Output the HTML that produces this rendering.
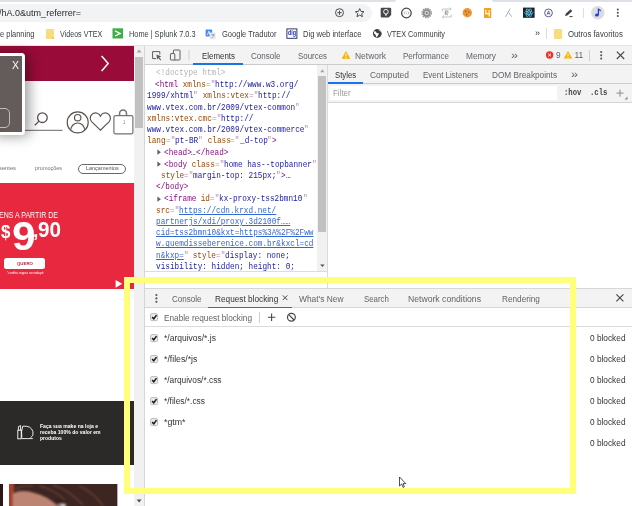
<!DOCTYPE html>
<html lang="pt-BR"><head><meta charset="utf-8"><title>DevTools - Request blocking</title>
<style>
html,body{margin:0;padding:0;}
body{width:632px;height:506px;overflow:hidden;position:relative;background:#fff;font-family:"Liberation Sans",sans-serif;}
#root{position:absolute;left:0;top:0;width:632px;height:506px;overflow:hidden;}
#root>div,#root>svg{position:absolute;box-sizing:border-box;}
.t{position:absolute;white-space:pre;transform-origin:0 50%;}
.t u{text-decoration:underline;}
</style></head><body><div id="root">
<div style="left:0px;top:0px;width:632px;height:46px;background:#fff;"></div>
<div style="left:0px;top:0px;width:396px;height:2px;background:#dfe1e8;border-bottom-right-radius:3px;"></div>
<div style="left:492px;top:0px;width:140px;height:2px;background:#dfe1e8;border-bottom-left-radius:3px;"></div>
<div style="left:-12px;top:4px;width:384px;height:18px;background:#f1f3f4;border-radius:9px;"></div>
<div style="left:0px;top:45px;width:632px;height:1px;background:#e3e3e3;"></div>
<svg style="left:334px;top:7px" width="32" height="12" viewBox="0 0 32 12"><g fill="none" stroke="#4a4d51" stroke-width="1"><circle cx="5.5" cy="5.7" r="4"/><path d="M5.5 3.5v4.4M3.3 5.7h4.4"/><path d="M25.7 1.6l1.3 2.8 3 .3-2.3 2 .7 3-2.7-1.6-2.7 1.6.7-3-2.3-2 3-.3z" stroke-linejoin="round"/></g></svg>
<svg style="left:378px;top:5px" width="250" height="16" viewBox="0 0 250 16"><path d="M3.700 2.700h8.500q1 0 1 1v6.300l-2.600 2.600h-6.900q-1 0-1-1v-7.900q0-1 1-1z" fill="#47484b"/><circle cx="7.900" cy="6.700" r="2.300" fill="none" stroke="#fff" stroke-width=".9"/><path d="M7 9.300h1.800v1.300h-1.800z" fill="#fff"/><circle cx="28.400" cy="8" r="4.800" fill="#fff" stroke="#46494d" stroke-width="1.250"/><path d="M27 6.600l-1.200 1.400 1.200 1.400M29.800 6.600l1.200 1.400-1.200 1.400" fill="none" stroke="#8a8d91" stroke-width=".7"/><circle cx="28.400" cy="8" r=".6" fill="#8a8d91"/><circle cx="48.700" cy="8" r="4.600" fill="none" stroke="#979797" stroke-width="1.400" stroke-dasharray="1.600 .8"/><circle cx="48.700" cy="8" r="3.900" fill="#8e8e8e"/><circle cx="48.700" cy="8" r="2.300" fill="#cfcfcf"/><circle cx="48.700" cy="8" r="1" fill="#7a7a7a"/><path d="M64.400 6.400v-2.400h8.600M71.600 2.600l1.600 1.400-1.600 1.400M73.200 9.600v2.400h-8.600M66 10.600l-1.600 1.400 1.600 1.400" fill="none" stroke="#b4b6b9" stroke-width=".8"/><path d="M67.300 10.200V5.900h1.700q1.200 0 1.200 1.100t-1.200 1.100h-1.500l2.500 2.100" fill="none" stroke="#8d8f92" stroke-width=".9"/><circle cx="89.3" cy="7.8" r="4.7" fill="#e99a3b"/><circle cx="87.6" cy="6.4" r=".8" fill="#a4561b"/><circle cx="90.8" cy="7.2" r=".8" fill="#a4561b"/><circle cx="88.6" cy="9.6" r=".8" fill="#a4561b"/><rect x="106" y="3" width="7.2" height="10" rx=".6" fill="#f5a21b"/><path d="M107.8 5v3.6h3.6M111.2 5v6.6" fill="none" stroke="#fff" stroke-width="1.1"/><path d="M132.2 3.6l-4.6 8.2M130.6 7.4l3.2 4.4" fill="none" stroke="#9fb0bf" stroke-width="1"/><rect x="145" y="2.6" width="11.6" height="10.2" fill="#1d2027"/><g fill="none" stroke="#5ad2f4" stroke-width=".7"><ellipse cx="150.8" cy="7.7" rx="4.3" ry="1.7"/><ellipse cx="150.8" cy="7.7" rx="4.3" ry="1.7" transform="rotate(60 150.8 7.7)"/><ellipse cx="150.8" cy="7.7" rx="4.3" ry="1.7" transform="rotate(120 150.8 7.7)"/></g><circle cx="150.8" cy="7.7" r=".8" fill="#5ad2f4"/><circle cx="170.500" cy="7.900" r="3.900" fill="#fff" stroke="#46537d" stroke-width=".9"/><path d="M169 9.700l1.500-3.800 1.500 3.800M169.500 8.600h2" fill="none" stroke="#46537d" stroke-width=".8"/><path d="M187 11.2l1-2.6 4.6-4.4 1.7 1.7-4.6 4.4z" fill="#3c3f43"/><path d="M191.5 11.6h3" stroke="#3c3f43" stroke-width="1"/><path d="M205.4 3v10" stroke="#dadce0" stroke-width="1"/><circle cx="219.8" cy="7.7" r="6.8" fill="#dcdde0"/><path d="M220.4 3.6v6.2" stroke="#1f3fd6" stroke-width="1.3" fill="none"/><ellipse cx="218.9" cy="10" rx="1.9" ry="1.5" fill="#1f3fd6"/><path d="M220.4 3.4q2.8 .6 3 3.4q-1.2-1.4-3-1.5z" fill="#1f3fd6"/><circle cx="239.8" cy="4.4" r="1" fill="#4a4d51"/><circle cx="239.8" cy="7.7" r="1" fill="#4a4d51"/><circle cx="239.8" cy="11" r="1" fill="#4a4d51"/></svg>
<div style="left:46px;top:29px;width:7.5px;height:9.5px;background:#f9dc7e;border-radius:1px;"></div>
<div style="left:51.5px;top:36.5px;width:2px;height:2px;background:#f3c846;"></div>
<svg style="left:112px;top:28px" width="12" height="11" viewBox="0 0 12 11"><rect x=".5" y=".3" width="10.6" height="10.2" fill="#3fae49"/><path d="M3 2.8l5.2 2.6L3 8" fill="none" stroke="#fff" stroke-width="1.3"/></svg>
<svg style="left:205.300px;top:28.800px" width="12" height="11" viewBox="0 0 12 11"><rect x=".6" y=".6" width="6.6" height="7" rx=".8" fill="#4a8af4"/><rect x="4.6" y="3.6" width="6" height="6.6" rx=".8" fill="#e4e6ea"/><path d="M2.4 6l1.5-3.8L5.4 6" stroke="#fff" stroke-width=".8" fill="none"/><path d="M6 5.8h3.6M7.8 5v1M6.6 8.8q2-1 2.4-3" stroke="#7b8087" stroke-width=".6" fill="none"/></svg>
<svg style="left:286px;top:28px" width="12" height="11" viewBox="0 0 12 11"><rect x=".9" y=".9" width="10" height="9.4" fill="#fff" stroke="#1b2455" stroke-width=".9"/></svg>
<svg style="left:372px;top:28px" width="11" height="11" viewBox="0 0 11 11"><circle cx="5.3" cy="5.5" r="4.4" fill="#3c4043"/><path d="M2.2 3.4q1.6-.4 2.2 1t2 .6q1 .8-.2 2t-1 2.4q-1.2-.2-1.4-1.8t-1.8-1.8z" fill="#fff"/><path d="M6.6 1.6q.4 1 1.6 1.2t1 1.4" stroke="#fff" stroke-width=".7" fill="none"/></svg>
<div style="left:546px;top:28px;width:1px;height:11px;background:#dadce0;"></div>
<div style="left:554.3px;top:29px;width:7.5px;height:9.5px;background:#f9dc7e;border-radius:1px;"></div>
<div style="left:0px;top:46px;width:134px;height:460px;background:#fff;"></div>
<div style="left:0px;top:46px;width:134px;height:35px;background:#990c3a;"></div>
<svg style="left:99px;top:54px" width="13" height="19" viewBox="0 0 13 19"><path d="M2.6 2l6.6 7.4L2.6 17" fill="none" stroke="#fff" stroke-width="1.5"/></svg>
<svg style="left:24px;top:108px" width="112" height="30" viewBox="0 0 112 30"><g fill="none" stroke="#5a5351" stroke-width="1.150"><circle cx="18.400" cy="9.700" r="4.800" stroke-width="1.300"/><path d="M15 13.100l-4.200 4.200" stroke-width="1.300"/><path d="M0 22.3h38.5" stroke="#8a8583"/><circle cx="53.700" cy="14.400" r="10.500"/><circle cx="53.700" cy="9.700" r="3.200"/><path d="M46.900 21.800A6.800 6.800 0 0 1 60.500 21.800"/><path d="M76.400 22.200l-8.600-8.400q-2.800-3.400-.6-6.600 2.400-3.400 6.200-2 2 .8 3 3 1-2.200 3-3 3.600-1.400 6 2 2.200 3.200-.4 6.600z"/><rect x="89.900" y="7.600" width="19" height="18.300" rx="1.600" stroke="#77716f" stroke-width="1.200"/><path d="M95.600 7.600V5.450A3.450 3.450 0 0 1 102.500 5.450V7.600" stroke="#77716f" stroke-width="1.500"/></g></svg>
<div style="left:77.6px;top:163.6px;width:48.6px;height:10.4px;background:#fff;border:1px solid #6b6563;border-radius:6px;"></div>
<div style="left:0px;top:183.2px;width:134px;height:105.5px;background:#e8283e;"></div>
<div style="left:4.2px;top:257.8px;width:40.4px;height:11.2px;background:#fff;border-radius:2.5px;"></div>
<svg style="left:115px;top:279px" width="9" height="10" viewBox="0 0 9 10"><path d="M.6 1l6.600 3.800L.6 8.800z" fill="#fff"/></svg>
<div style="left:0px;top:401px;width:134px;height:63.6px;background:#2c2a29;"></div>
<svg style="left:16px;top:423px" width="20" height="18" viewBox="0 0 20 18"><g fill="none" stroke="#fff" stroke-width=".9"><path d="M5.800 14.800q-1-6.800 1-11.600 8.400-.8 10.200 5.600.8 4-2.400 6"/><rect x="1.800" y="7.200" width="3.400" height="8.600"/><path d="M2.400 7.200v-3.600l2.200-1v4.600"/><path d="M5.800 15.600h11"/></g></svg>
<div style="left:0px;top:483.6px;width:2.8px;height:22.4px;background:#2e1518;"></div>
<svg style="left:9.300px;top:483.600px" width="108.400" height="22.400" viewBox="0 0 108.400 22.400"><defs><filter id="bl" x="-5%" y="-20%" width="110%" height="140%"><feGaussianBlur stdDeviation="0.9"/></filter><clipPath id="pc"><rect width="108.400" height="22.400"/></clipPath></defs><rect width="108.400" height="22.400" fill="#3d2521"/><g clip-path="url(#pc)"><g filter="url(#bl)"><rect x="-2" y="-2" width="7" height="26" fill="#a8432f"/><path d="M4 24V9.500q6-3.500 16-2 14 3 22 9 5 3.500 9 7.500z" fill="#bd8473"/><path d="M6 5q8-4 18-3M30 2q14 3 26 14M44 1q16 5 30 20M70 2q14 6 24 20" stroke="#6d463b" stroke-width="1.600" fill="none" opacity=".8"/><path d="M45 19q5-3.500 13-1.500" stroke="#2a1815" stroke-width="1.500" fill="none"/><ellipse cx="53" cy="21.400" rx="4.200" ry="1.700" fill="#e4dcd8"/><circle cx="51" cy="22" r="1.300" fill="#5b4a44"/></g></g></svg>
<div style="left:-10px;top:53.4px;width:35px;height:81.3px;background:#645c5b;border:3.100px solid #fff;border-radius:3.500px;box-shadow:4px 1px 13px rgba(0,0,0,.4);"></div>
<div style="left:-6px;top:107.6px;width:16.4px;height:20.4px;background:transparent;border:1.200px solid #c2bab8;border-radius:5px;"></div>
<div style="left:133.5px;top:46px;width:11px;height:460px;background:#f1f1f1;"></div>
<div style="left:135.4px;top:57px;width:7.4px;height:71px;background:#c1c1c1;"></div>
<svg style="left:134px;top:46px" width="10" height="10" viewBox="0 0 10 10"><path d="M2.600 6.400l2.500-2.800 2.500 2.800z" fill="#a3a3a3"/></svg>
<svg style="left:134.200px;top:496.200px" width="10" height="10" viewBox="0 0 10 10"><path d="M2.600 3.600l2.500 2.800 2.500-2.800z" fill="#505050"/></svg>
<div style="left:144.4px;top:46px;width:1px;height:460px;background:#d6d6d6;"></div>
<div style="left:145.4px;top:46px;width:486.6px;height:460px;background:#fff;"></div>
<div style="left:145.4px;top:46px;width:486.6px;height:18.6px;background:#f3f3f3;border-bottom:1px solid #cbcbcb;"></div>
<svg style="left:150px;top:48px" width="44" height="14" viewBox="0 0 44 14"><g fill="none" stroke="#5a5d61" stroke-width="1"><path d="M9.800 6.600V3.600H2.600v7h3.600"/><path d="M6.400 6.600l5 1.900-2.100.8 1.900 2.400-.9.700-1.900-2.500-1.200 1.600z" fill="#5a5d61" stroke="none"/><rect x="23.400" y="2" width="6.600" height="10" rx=".8"/><rect x="20.400" y="5.600" width="4.400" height="6.400" rx=".6" fill="#f3f3f3"/><path d="M39 2v10" stroke="#cfcfcf"/></g></svg>
<div style="left:193px;top:63.2px;width:50.4px;height:1.6px;background:#1a73e8;"></div>
<svg style="left:341px;top:50px" width="10" height="10" viewBox="0 0 10 10"><path d="M5 .9l4.400 7.900H.6z" fill="#f4b400"/><path d="M5 3.600v2.800" stroke="#fff" stroke-width="1"/><circle cx="5" cy="7.500" r=".55" fill="#fff"/></svg>
<svg style="left:545px;top:50px" width="30" height="10" viewBox="0 0 30 10"><circle cx="4.600" cy="5" r="3.700" fill="#e8352b"/><path d="M3.200 3.600l2.800 2.800M6 3.600l-2.800 2.800" stroke="#fff" stroke-width=".9"/><path d="M23 1l4.200 7.600h-8.400z" fill="#f4b400"/><path d="M23 3.600v2.600" stroke="#fff" stroke-width=".9"/><circle cx="23" cy="7.300" r=".5" fill="#fff"/></svg>
<div style="left:589px;top:50px;width:1px;height:11px;background:#cfcfcf;"></div>
<svg style="left:597px;top:49px" width="30" height="13" viewBox="0 0 30 13"><circle cx="4.200" cy="3" r="1.080" fill="#55585c"/><circle cx="4.200" cy="6.300" r="1.080" fill="#55585c"/><circle cx="4.200" cy="9.600" r="1.080" fill="#55585c"/><path d="M19.800 2.600l7.400 7.400M27.200 2.600l-7.400 7.400" stroke="#45484c" stroke-width="1.200"/></svg>
<div style="left:317.3px;top:65px;width:9.9px;height:207px;background:#f1f1f1;"></div>
<div style="left:318.2px;top:76px;width:7.8px;height:156px;background:#c1c1c1;"></div>
<svg style="left:317.600px;top:67.200px" width="9" height="8" viewBox="0 0 9 8"><path d="M2.200 5.200l2.200-2.600 2.200 2.600z" fill="#a3a3a3"/></svg>
<svg style="left:317.800px;top:261.500px" width="9" height="8" viewBox="0 0 9 8"><path d="M2.200 2.400l2.200 2.600 2.200-2.600z" fill="#505050"/></svg>
<div style="left:327.2px;top:65px;width:1px;height:223px;background:#dadada;"></div>
<div style="left:145.4px;top:271.4px;width:182px;height:1px;background:#dcdcdc;"></div>
<svg style="left:157px;top:148.80px" width="5" height="7" viewBox="0 0 5 7"><path d="M.4 .6l3.500 2.600L.4 5.800z" fill="#5f5f5f"/></svg>
<svg style="left:157px;top:160.80px" width="5" height="7" viewBox="0 0 5 7"><path d="M.4 .6l3.500 2.600L.4 5.800z" fill="#5f5f5f"/></svg>
<svg style="left:157px;top:195.50px" width="5" height="7" viewBox="0 0 5 7"><path d="M.4 .6l3.500 2.600L.4 5.800z" fill="#5f5f5f"/></svg>
<div style="left:328.2px;top:64.6px;width:303.8px;height:19.6px;background:#f3f3f3;border-bottom:1px solid #cbcbcb;"></div>
<div style="left:328.2px;top:82.4px;width:34.6px;height:1.8px;background:#1a73e8;"></div>
<div style="left:328.2px;top:84.2px;width:303.8px;height:18.6px;background:#f3f3f3;border-bottom:1px solid #d6d6d6;"></div>
<div style="left:329.5px;top:85.8px;width:227px;height:14.5px;background:#fff;"></div>
<svg style="left:614px;top:87px" width="16" height="14" viewBox="0 0 16 14"><path d="M6 2.600v7M2.500 6.100h7" stroke="#8a8a8a" stroke-width="1"/><path d="M13.500 12.500h-3l3-3z" fill="#8a8a8a"/></svg>
<div style="left:145.4px;top:287.6px;width:486.6px;height:1px;background:#d6d6d6;"></div>
<div style="left:145.4px;top:288.6px;width:486.6px;height:19.2px;background:#f3f3f3;border-bottom:1px solid #d6d6d6;"></div>
<svg style="left:153px;top:292px" width="7" height="13" viewBox="0 0 7 13"><circle cx="3.400" cy="3" r="1.080" fill="#55585c"/><circle cx="3.400" cy="6.400" r="1.080" fill="#55585c"/><circle cx="3.400" cy="9.800" r="1.080" fill="#55585c"/></svg>
<svg style="left:281px;top:294px" width="8" height="8" viewBox="0 0 8 8"><path d="M1.800 1.400l4.600 4.600M6.400 1.400l-4.600 4.600" stroke="#45484c" stroke-width="1"/></svg>
<div style="left:208.3px;top:306.7px;width:83.5px;height:1.7px;background:#1a73e8;"></div>
<svg style="left:615px;top:293px" width="10" height="10" viewBox="0 0 10 10"><path d="M1.400 1.400l7 7M8.400 1.400l-7 7" stroke="#45484c" stroke-width="1.200"/></svg>
<div style="left:145.4px;top:326px;width:486.6px;height:1px;background:#dcdcdc;"></div>
<svg style="left:150.2px;top:313px" width="9" height="9" viewBox="0 0 9 9"><rect x=".6" y=".6" width="7" height="7" rx="1.300" fill="#ececec" stroke="#bcbcbc" stroke-width="1"/><path d="M2.100 4.100l1.700 1.700 2.700-3.700" fill="none" stroke="#1c1c1c" stroke-width="1.500"/></svg>
<div style="left:259px;top:312.3px;width:1px;height:11px;background:#cfcfcf;"></div>
<svg style="left:266px;top:311px" width="32" height="13" viewBox="0 0 32 13"><path d="M5.600 2.600v7.400M1.900 6.300h7.400" stroke="#45484c" stroke-width="1.100"/><circle cx="25.400" cy="6.300" r="3.900" fill="none" stroke="#45484c" stroke-width="1.200"/><path d="M22.700 3.600l5.400 5.400" stroke="#45484c" stroke-width="1.200"/></svg>
<svg style="left:150.2px;top:333.8px" width="9" height="9" viewBox="0 0 9 9"><rect x=".6" y=".6" width="7" height="7" rx="1.300" fill="#ececec" stroke="#bcbcbc" stroke-width="1"/><path d="M2.100 4.100l1.700 1.700 2.700-3.700" fill="none" stroke="#1c1c1c" stroke-width="1.500"/></svg>
<svg style="left:150.2px;top:354.8px" width="9" height="9" viewBox="0 0 9 9"><rect x=".6" y=".6" width="7" height="7" rx="1.300" fill="#ececec" stroke="#bcbcbc" stroke-width="1"/><path d="M2.100 4.100l1.700 1.700 2.700-3.700" fill="none" stroke="#1c1c1c" stroke-width="1.500"/></svg>
<svg style="left:150.2px;top:375.8px" width="9" height="9" viewBox="0 0 9 9"><rect x=".6" y=".6" width="7" height="7" rx="1.300" fill="#ececec" stroke="#bcbcbc" stroke-width="1"/><path d="M2.100 4.100l1.700 1.700 2.700-3.700" fill="none" stroke="#1c1c1c" stroke-width="1.500"/></svg>
<svg style="left:150.2px;top:396.8px" width="9" height="9" viewBox="0 0 9 9"><rect x=".6" y=".6" width="7" height="7" rx="1.300" fill="#ececec" stroke="#bcbcbc" stroke-width="1"/><path d="M2.100 4.100l1.700 1.700 2.700-3.700" fill="none" stroke="#1c1c1c" stroke-width="1.500"/></svg>
<svg style="left:150.2px;top:417.8px" width="9" height="9" viewBox="0 0 9 9"><rect x=".6" y=".6" width="7" height="7" rx="1.300" fill="#ececec" stroke="#bcbcbc" stroke-width="1"/><path d="M2.100 4.100l1.700 1.700 2.700-3.700" fill="none" stroke="#1c1c1c" stroke-width="1.500"/></svg>
<span class="t" style='left:-1.50px;top:9.21px;font-size:9.2px;line-height:9.2px;color:#2a2d30;font-family:"Liberation Sans", sans-serif;font-weight:400;transform:scaleX(0.9820);'>/hA.0&amp;utm_referrer=</span>
<span class="t" style='left:-0.50px;top:30.00px;font-size:8.5px;line-height:8.5px;color:#3c4043;font-family:"Liberation Sans", sans-serif;font-weight:400;transform:scaleX(0.8793);'>e planning</span>
<span class="t" style='left:60.00px;top:30.00px;font-size:8.5px;line-height:8.5px;color:#3c4043;font-family:"Liberation Sans", sans-serif;font-weight:400;transform:scaleX(0.8392);'>Videos VTEX</span>
<span class="t" style='left:128.50px;top:30.00px;font-size:8.5px;line-height:8.5px;color:#3c4043;font-family:"Liberation Sans", sans-serif;font-weight:400;transform:scaleX(0.8650);'>Home | Splunk 7.0.3</span>
<span class="t" style='left:221.50px;top:30.00px;font-size:8.5px;line-height:8.5px;color:#3c4043;font-family:"Liberation Sans", sans-serif;font-weight:400;transform:scaleX(0.8871);'>Google Tradutor</span>
<span class="t" style='left:287.90px;top:30.41px;font-size:6.6px;line-height:6.6px;color:#2a35c8;font-family:"Liberation Sans", sans-serif;font-weight:700;transform:scaleX(0.8291);'>dig</span>
<span class="t" style='left:302.60px;top:30.00px;font-size:8.5px;line-height:8.5px;color:#3c4043;font-family:"Liberation Sans", sans-serif;font-weight:400;transform:scaleX(0.8893);'>Dig web interface</span>
<span class="t" style='left:387.00px;top:30.00px;font-size:8.5px;line-height:8.5px;color:#3c4043;font-family:"Liberation Sans", sans-serif;font-weight:400;transform:scaleX(0.8587);'>VTEX Community</span>
<span class="t" style='left:534.80px;top:28.58px;font-size:9px;line-height:9px;color:#3c4043;font-family:"Liberation Sans", sans-serif;font-weight:400;transform:scaleX(0.9969);'>»</span>
<span class="t" style='left:568.20px;top:30.00px;font-size:8.5px;line-height:8.5px;color:#3c4043;font-family:"Liberation Sans", sans-serif;font-weight:400;transform:scaleX(0.9133);'>Outros favoritos</span>
<span class="t" style='left:122.70px;top:120.99px;font-size:4.5px;line-height:4.5px;color:#777;font-family:"Liberation Sans", sans-serif;font-weight:400;transform:scaleX(0.8745);'>1</span>
<span class="t" style='left:-1.50px;top:165.56px;font-size:5.6px;line-height:5.6px;color:#77716f;font-family:"Liberation Sans", sans-serif;font-weight:400;transform:scaleX(1.0313);'>sentes</span>
<span class="t" style='left:35.00px;top:165.56px;font-size:5.6px;line-height:5.6px;color:#77716f;font-family:"Liberation Sans", sans-serif;font-weight:400;transform:scaleX(0.9757);'>promoções</span>
<span class="t" style='left:85.60px;top:165.96px;font-size:5.6px;line-height:5.6px;color:#5a5553;font-family:"Liberation Sans", sans-serif;font-weight:400;transform:scaleX(0.9764);'>Lançamentos</span>
<span class="t" style='left:-1.00px;top:211.09px;font-size:8.4px;line-height:8.4px;color:#fff;font-family:"Liberation Sans", sans-serif;font-weight:400;transform:scaleX(0.8376);'>ENS A PARTIR DE</span>
<span class="t" style='left:0.90px;top:223.50px;font-size:17.6px;line-height:17.6px;color:#fff;font-family:"Liberation Sans", sans-serif;font-weight:700;transform:scaleX(0.9595);'>$</span>
<span class="t" style='left:11.80px;top:215.54px;font-size:40px;line-height:40px;color:#fff;font-family:"Liberation Sans", sans-serif;font-weight:700;transform:scaleX(1.0607);'>9</span>
<span class="t" style='left:33.40px;top:221.12px;font-size:19px;line-height:19px;color:#fff;font-family:"Liberation Sans", sans-serif;font-weight:700;transform:scaleX(1.0225);'>,</span>
<span class="t" style='left:38.30px;top:220.28px;font-size:21.4px;line-height:21.4px;color:#fff;font-family:"Liberation Sans", sans-serif;font-weight:700;transform:scaleX(0.9665);'>90</span>
<span class="t" style='left:16.50px;top:262.04px;font-size:4.2px;line-height:4.2px;color:#b0203a;font-family:"Liberation Sans", sans-serif;font-weight:700;transform:scaleX(1.0352);'>QUERO</span>
<span class="t" style='left:7.10px;top:271.72px;font-size:3.4px;line-height:3.4px;color:#fff;font-family:"Liberation Sans", sans-serif;font-weight:400;transform:scaleX(0.9539);'>*confira regras no rodapé</span>
<span class="t" style='left:40.40px;top:424.06px;font-size:5.6px;line-height:5.6px;color:#fff;font-family:"Liberation Sans", sans-serif;font-weight:700;transform:scaleX(0.9114);'>Faça sua make na loja e</span>
<span class="t" style='left:40.40px;top:429.96px;font-size:5.6px;line-height:5.6px;color:#fff;font-family:"Liberation Sans", sans-serif;font-weight:700;transform:scaleX(0.9064);'>receba 100% do valor em</span>
<span class="t" style='left:40.40px;top:435.86px;font-size:5.6px;line-height:5.6px;color:#fff;font-family:"Liberation Sans", sans-serif;font-weight:700;transform:scaleX(0.8990);'>produtos</span>
<span class="t" style='left:11.60px;top:59.69px;font-size:11px;line-height:11px;color:#fff;font-family:"Liberation Sans", sans-serif;font-weight:400;transform:scaleX(0.9532);'>X</span>
<span class="t" style='left:202.00px;top:51.89px;font-size:8.4px;line-height:8.4px;color:#333;font-family:"Liberation Sans", sans-serif;font-weight:400;transform:scaleX(0.9450);'>Elements</span>
<span class="t" style='left:251.40px;top:51.89px;font-size:8.4px;line-height:8.4px;color:#5f6368;font-family:"Liberation Sans", sans-serif;font-weight:400;transform:scaleX(0.9631);'>Console</span>
<span class="t" style='left:297.50px;top:51.89px;font-size:8.4px;line-height:8.4px;color:#5f6368;font-family:"Liberation Sans", sans-serif;font-weight:400;transform:scaleX(0.9436);'>Sources</span>
<span class="t" style='left:355.00px;top:51.89px;font-size:8.4px;line-height:8.4px;color:#5f6368;font-family:"Liberation Sans", sans-serif;font-weight:400;transform:scaleX(1.0092);'>Network</span>
<span class="t" style='left:403.00px;top:51.89px;font-size:8.4px;line-height:8.4px;color:#5f6368;font-family:"Liberation Sans", sans-serif;font-weight:400;transform:scaleX(0.9593);'>Performance</span>
<span class="t" style='left:466.00px;top:51.89px;font-size:8.4px;line-height:8.4px;color:#5f6368;font-family:"Liberation Sans", sans-serif;font-weight:400;transform:scaleX(0.9917);'>Memory</span>
<span class="t" style='left:510.50px;top:49.71px;font-size:10.5px;line-height:10.5px;color:#5f6368;font-family:"Liberation Sans", sans-serif;font-weight:400;transform:scaleX(1.1979);'>»</span>
<span class="t" style='left:555.60px;top:51.86px;font-size:8.2px;line-height:8.2px;color:#5f6368;font-family:"Liberation Sans", sans-serif;font-weight:400;transform:scaleX(1.0082);'>9</span>
<span class="t" style='left:574.50px;top:51.86px;font-size:8.2px;line-height:8.2px;color:#5f6368;font-family:"Liberation Sans", sans-serif;font-weight:400;transform:scaleX(1.0000);'>11</span>
<span class="t" style='left:155.80px;top:68.71px;font-size:8.2px;line-height:8.2px;color:#b4b4b4;font-family:"Liberation Mono", monospace;font-weight:400;transform:scaleX(0.9423);'>&lt;!doctype html&gt;</span>
<span class="t" style='left:155.00px;top:80.71px;font-size:8.2px;line-height:8.2px;color:#881280;font-family:"Liberation Mono", monospace;font-weight:400;transform:scaleX(0.9419);'>&lt;html</span>
<span class="t" style='left:178.15px;top:80.71px;font-size:8.2px;line-height:8.2px;color:#994500;font-family:"Liberation Mono", monospace;font-weight:400;transform:scaleX(0.9422);'> xmlns</span>
<span class="t" style='left:205.93px;top:80.71px;font-size:8.2px;line-height:8.2px;color:#b58ab2;font-family:"Liberation Mono", monospace;font-weight:400;transform:scaleX(0.9422);'>=&quot;</span>
<span class="t" style='left:215.19px;top:80.71px;font-size:8.2px;line-height:8.2px;color:#1a1aa6;font-family:"Liberation Mono", monospace;font-weight:400;transform:scaleX(0.9422);'>http://www.w3.org/</span>
<span class="t" style='left:147.00px;top:92.21px;font-size:8.2px;line-height:8.2px;color:#1a1aa6;font-family:"Liberation Mono", monospace;font-weight:400;transform:scaleX(0.9422);'>1999/xhtml</span>
<span class="t" style='left:193.30px;top:92.21px;font-size:8.2px;line-height:8.2px;color:#b58ab2;font-family:"Liberation Mono", monospace;font-weight:400;transform:scaleX(0.9407);'>&quot;</span>
<span class="t" style='left:197.93px;top:92.21px;font-size:8.2px;line-height:8.2px;color:#994500;font-family:"Liberation Mono", monospace;font-weight:400;transform:scaleX(0.9423);'> xmlns:vtex</span>
<span class="t" style='left:248.86px;top:92.21px;font-size:8.2px;line-height:8.2px;color:#b58ab2;font-family:"Liberation Mono", monospace;font-weight:400;transform:scaleX(0.9422);'>=&quot;</span>
<span class="t" style='left:258.12px;top:92.21px;font-size:8.2px;line-height:8.2px;color:#1a1aa6;font-family:"Liberation Mono", monospace;font-weight:400;transform:scaleX(0.9420);'>http://</span>
<span class="t" style='left:147.00px;top:103.71px;font-size:8.2px;line-height:8.2px;color:#1a1aa6;font-family:"Liberation Mono", monospace;font-weight:400;transform:scaleX(0.9423);'>www.vtex.com.br/2009/vtex-common</span>
<span class="t" style='left:295.16px;top:103.71px;font-size:8.2px;line-height:8.2px;color:#b58ab2;font-family:"Liberation Mono", monospace;font-weight:400;transform:scaleX(0.9407);'>&quot;</span>
<span class="t" style='left:147.00px;top:114.71px;font-size:8.2px;line-height:8.2px;color:#994500;font-family:"Liberation Mono", monospace;font-weight:400;transform:scaleX(0.9422);'>xmlns:vtex.cmc</span>
<span class="t" style='left:211.82px;top:114.71px;font-size:8.2px;line-height:8.2px;color:#b58ab2;font-family:"Liberation Mono", monospace;font-weight:400;transform:scaleX(0.9422);'>=&quot;</span>
<span class="t" style='left:221.08px;top:114.71px;font-size:8.2px;line-height:8.2px;color:#1a1aa6;font-family:"Liberation Mono", monospace;font-weight:400;transform:scaleX(0.9420);'>http://</span>
<span class="t" style='left:147.00px;top:126.11px;font-size:8.2px;line-height:8.2px;color:#1a1aa6;font-family:"Liberation Mono", monospace;font-weight:400;transform:scaleX(0.9423);'>www.vtex.com.br/2009/vtex-commerce</span>
<span class="t" style='left:304.42px;top:126.11px;font-size:8.2px;line-height:8.2px;color:#b58ab2;font-family:"Liberation Mono", monospace;font-weight:400;transform:scaleX(0.9407);'>&quot;</span>
<span class="t" style='left:147.00px;top:137.21px;font-size:8.2px;line-height:8.2px;color:#994500;font-family:"Liberation Mono", monospace;font-weight:400;transform:scaleX(0.9422);'>lang</span>
<span class="t" style='left:165.52px;top:137.21px;font-size:8.2px;line-height:8.2px;color:#b58ab2;font-family:"Liberation Mono", monospace;font-weight:400;transform:scaleX(0.9422);'>=&quot;</span>
<span class="t" style='left:174.78px;top:137.21px;font-size:8.2px;line-height:8.2px;color:#1a1aa6;font-family:"Liberation Mono", monospace;font-weight:400;transform:scaleX(0.9419);'>pt-BR</span>
<span class="t" style='left:197.93px;top:137.21px;font-size:8.2px;line-height:8.2px;color:#b58ab2;font-family:"Liberation Mono", monospace;font-weight:400;transform:scaleX(0.9407);'>&quot;</span>
<span class="t" style='left:202.56px;top:137.21px;font-size:8.2px;line-height:8.2px;color:#994500;font-family:"Liberation Mono", monospace;font-weight:400;transform:scaleX(0.9422);'> class</span>
<span class="t" style='left:230.34px;top:137.21px;font-size:8.2px;line-height:8.2px;color:#b58ab2;font-family:"Liberation Mono", monospace;font-weight:400;transform:scaleX(0.9422);'>=&quot;</span>
<span class="t" style='left:239.60px;top:137.21px;font-size:8.2px;line-height:8.2px;color:#1a1aa6;font-family:"Liberation Mono", monospace;font-weight:400;transform:scaleX(0.9422);'>_d-top</span>
<span class="t" style='left:267.38px;top:137.21px;font-size:8.2px;line-height:8.2px;color:#b58ab2;font-family:"Liberation Mono", monospace;font-weight:400;transform:scaleX(0.9407);'>&quot;</span>
<span class="t" style='left:272.01px;top:137.21px;font-size:8.2px;line-height:8.2px;color:#881280;font-family:"Liberation Mono", monospace;font-weight:400;transform:scaleX(0.9407);'>&gt;</span>
<span class="t" style='left:163.70px;top:148.71px;font-size:8.2px;line-height:8.2px;color:#881280;font-family:"Liberation Mono", monospace;font-weight:400;transform:scaleX(0.9422);'>&lt;head&gt;</span>
<span class="t" style='left:191.48px;top:148.71px;font-size:8.2px;line-height:8.2px;color:#333;font-family:"Liberation Mono", monospace;font-weight:400;transform:scaleX(0.9407);'>…</span>
<span class="t" style='left:196.11px;top:148.71px;font-size:8.2px;line-height:8.2px;color:#881280;font-family:"Liberation Mono", monospace;font-weight:400;transform:scaleX(0.9420);'>&lt;/head&gt;</span>
<span class="t" style='left:163.70px;top:160.71px;font-size:8.2px;line-height:8.2px;color:#881280;font-family:"Liberation Mono", monospace;font-weight:400;transform:scaleX(0.9419);'>&lt;body</span>
<span class="t" style='left:186.85px;top:160.71px;font-size:8.2px;line-height:8.2px;color:#994500;font-family:"Liberation Mono", monospace;font-weight:400;transform:scaleX(0.9422);'> class</span>
<span class="t" style='left:214.63px;top:160.71px;font-size:8.2px;line-height:8.2px;color:#b58ab2;font-family:"Liberation Mono", monospace;font-weight:400;transform:scaleX(0.9422);'>=&quot;</span>
<span class="t" style='left:223.89px;top:160.71px;font-size:8.2px;line-height:8.2px;color:#1a1aa6;font-family:"Liberation Mono", monospace;font-weight:400;transform:scaleX(0.9423);'>home has--topbanner</span>
<span class="t" style='left:311.86px;top:160.71px;font-size:8.2px;line-height:8.2px;color:#b58ab2;font-family:"Liberation Mono", monospace;font-weight:400;transform:scaleX(0.9407);'>&quot;</span>
<span class="t" style='left:160.50px;top:172.11px;font-size:8.2px;line-height:8.2px;color:#994500;font-family:"Liberation Mono", monospace;font-weight:400;transform:scaleX(0.9419);'>style</span>
<span class="t" style='left:183.65px;top:172.11px;font-size:8.2px;line-height:8.2px;color:#b58ab2;font-family:"Liberation Mono", monospace;font-weight:400;transform:scaleX(0.9422);'>=&quot;</span>
<span class="t" style='left:192.91px;top:172.11px;font-size:8.2px;line-height:8.2px;color:#1a1aa6;font-family:"Liberation Mono", monospace;font-weight:400;transform:scaleX(0.9422);'>margin-top: 215px;</span>
<span class="t" style='left:276.25px;top:172.11px;font-size:8.2px;line-height:8.2px;color:#b58ab2;font-family:"Liberation Mono", monospace;font-weight:400;transform:scaleX(0.9407);'>&quot;</span>
<span class="t" style='left:280.88px;top:172.11px;font-size:8.2px;line-height:8.2px;color:#881280;font-family:"Liberation Mono", monospace;font-weight:400;transform:scaleX(0.9407);'>&gt;</span>
<span class="t" style='left:285.51px;top:172.11px;font-size:8.2px;line-height:8.2px;color:#333;font-family:"Liberation Mono", monospace;font-weight:400;transform:scaleX(0.9407);'>…</span>
<span class="t" style='left:156.00px;top:183.11px;font-size:8.2px;line-height:8.2px;color:#881280;font-family:"Liberation Mono", monospace;font-weight:400;transform:scaleX(0.9420);'>&lt;/body&gt;</span>
<span class="t" style='left:163.70px;top:195.41px;font-size:8.2px;line-height:8.2px;color:#881280;font-family:"Liberation Mono", monospace;font-weight:400;transform:scaleX(0.9420);'>&lt;iframe</span>
<span class="t" style='left:196.11px;top:195.41px;font-size:8.2px;line-height:8.2px;color:#994500;font-family:"Liberation Mono", monospace;font-weight:400;transform:scaleX(0.9417);'> id</span>
<span class="t" style='left:210.00px;top:195.41px;font-size:8.2px;line-height:8.2px;color:#b58ab2;font-family:"Liberation Mono", monospace;font-weight:400;transform:scaleX(0.9422);'>=&quot;</span>
<span class="t" style='left:219.26px;top:195.41px;font-size:8.2px;line-height:8.2px;color:#1a1aa6;font-family:"Liberation Mono", monospace;font-weight:400;transform:scaleX(0.9422);'>kx-proxy-tss2bmn10</span>
<span class="t" style='left:302.60px;top:195.41px;font-size:8.2px;line-height:8.2px;color:#b58ab2;font-family:"Liberation Mono", monospace;font-weight:400;transform:scaleX(0.9407);'>&quot;</span>
<span class="t" style='left:156.00px;top:206.71px;font-size:8.2px;line-height:8.2px;color:#994500;font-family:"Liberation Mono", monospace;font-weight:400;transform:scaleX(0.9417);'>src</span>
<span class="t" style='left:169.89px;top:206.71px;font-size:8.2px;line-height:8.2px;color:#b58ab2;font-family:"Liberation Mono", monospace;font-weight:400;transform:scaleX(0.9422);'>=&quot;</span>
<span class="t" style='left:179.15px;top:206.71px;font-size:8.2px;line-height:8.2px;color:#3367d6;font-family:"Liberation Mono", monospace;font-weight:400;transform:scaleX(0.9423);text-decoration:underline;'>https://cdn.krxd.net/</span>
<span class="t" style='left:156.00px;top:217.81px;font-size:8.2px;line-height:8.2px;color:#3367d6;font-family:"Liberation Mono", monospace;font-weight:400;transform:scaleX(0.9422);text-decoration:underline;'>partnerjs/xdi/proxy.3d2100f……</span>
<span class="t" style='left:156.00px;top:229.01px;font-size:8.2px;line-height:8.2px;color:#3367d6;font-family:"Liberation Mono", monospace;font-weight:400;transform:scaleX(0.9423);text-decoration:underline;'>cid=tss2bmn10&amp;kxt=https%3A%2F%2Fww</span>
<span class="t" style='left:156.00px;top:240.41px;font-size:8.2px;line-height:8.2px;color:#3367d6;font-family:"Liberation Mono", monospace;font-weight:400;transform:scaleX(0.9423);text-decoration:underline;'>w.quemdisseberenice.com.br&amp;kxcl=cd</span>
<span class="t" style='left:156.00px;top:251.51px;font-size:8.2px;line-height:8.2px;color:#3367d6;font-family:"Liberation Mono", monospace;font-weight:400;transform:scaleX(0.9422);text-decoration:underline;'>n&amp;kxp=</span>
<span class="t" style='left:183.78px;top:251.51px;font-size:8.2px;line-height:8.2px;color:#b58ab2;font-family:"Liberation Mono", monospace;font-weight:400;transform:scaleX(0.9407);'>&quot;</span>
<span class="t" style='left:188.41px;top:251.51px;font-size:8.2px;line-height:8.2px;color:#994500;font-family:"Liberation Mono", monospace;font-weight:400;transform:scaleX(0.9422);'> style</span>
<span class="t" style='left:216.19px;top:251.51px;font-size:8.2px;line-height:8.2px;color:#b58ab2;font-family:"Liberation Mono", monospace;font-weight:400;transform:scaleX(0.9422);'>=&quot;</span>
<span class="t" style='left:225.45px;top:251.51px;font-size:8.2px;line-height:8.2px;color:#1a1aa6;font-family:"Liberation Mono", monospace;font-weight:400;transform:scaleX(0.9422);'>display: none;</span>
<span class="t" style='left:156.00px;top:262.61px;font-size:8.2px;line-height:8.2px;color:#1a1aa6;font-family:"Liberation Mono", monospace;font-weight:400;transform:scaleX(0.9423);'>visibility: hidden; height: 0;</span>
<span class="t" style='left:334.60px;top:70.79px;font-size:8.4px;line-height:8.4px;color:#333;font-family:"Liberation Sans", sans-serif;font-weight:400;transform:scaleX(0.9249);'>Styles</span>
<span class="t" style='left:370.00px;top:70.79px;font-size:8.4px;line-height:8.4px;color:#5f6368;font-family:"Liberation Sans", sans-serif;font-weight:400;transform:scaleX(1.0093);'>Computed</span>
<span class="t" style='left:423.00px;top:70.79px;font-size:8.4px;line-height:8.4px;color:#5f6368;font-family:"Liberation Sans", sans-serif;font-weight:400;transform:scaleX(0.9526);'>Event Listeners</span>
<span class="t" style='left:492.00px;top:70.79px;font-size:8.4px;line-height:8.4px;color:#5f6368;font-family:"Liberation Sans", sans-serif;font-weight:400;transform:scaleX(0.9835);'>DOM Breakpoints</span>
<span class="t" style='left:570.50px;top:68.71px;font-size:10.5px;line-height:10.5px;color:#5f6368;font-family:"Liberation Sans", sans-serif;font-weight:400;transform:scaleX(1.1979);'>»</span>
<span class="t" style='left:333.30px;top:89.19px;font-size:8.4px;line-height:8.4px;color:#9a9a9a;font-family:"Liberation Sans", sans-serif;font-weight:400;transform:scaleX(0.9503);'>Filter</span>
<span class="t" style='left:564.40px;top:89.31px;font-size:8.6px;line-height:8.6px;color:#444;font-family:"Liberation Mono", monospace;font-weight:700;transform:scaleX(0.8478);'>:hov</span>
<span class="t" style='left:589.50px;top:89.31px;font-size:8.6px;line-height:8.6px;color:#444;font-family:"Liberation Mono", monospace;font-weight:700;transform:scaleX(0.8478);'>.cls</span>
<span class="t" style='left:171.60px;top:294.89px;font-size:8.4px;line-height:8.4px;color:#5f6368;font-family:"Liberation Sans", sans-serif;font-weight:400;transform:scaleX(0.9631);'>Console</span>
<span class="t" style='left:215.10px;top:294.89px;font-size:8.4px;line-height:8.4px;color:#333;font-family:"Liberation Sans", sans-serif;font-weight:400;transform:scaleX(0.9852);'>Request blocking</span>
<span class="t" style='left:299.00px;top:294.89px;font-size:8.4px;line-height:8.4px;color:#5f6368;font-family:"Liberation Sans", sans-serif;font-weight:400;transform:scaleX(1.0018);'>What&#x27;s New</span>
<span class="t" style='left:363.60px;top:294.89px;font-size:8.4px;line-height:8.4px;color:#5f6368;font-family:"Liberation Sans", sans-serif;font-weight:400;transform:scaleX(0.9380);'>Search</span>
<span class="t" style='left:408.00px;top:294.89px;font-size:8.4px;line-height:8.4px;color:#5f6368;font-family:"Liberation Sans", sans-serif;font-weight:400;transform:scaleX(1.0316);'>Network conditions</span>
<span class="t" style='left:501.60px;top:294.89px;font-size:8.4px;line-height:8.4px;color:#5f6368;font-family:"Liberation Sans", sans-serif;font-weight:400;transform:scaleX(0.9804);'>Rendering</span>
<span class="t" style='left:164.00px;top:313.69px;font-size:8.4px;line-height:8.4px;color:#5f6368;font-family:"Liberation Sans", sans-serif;font-weight:400;transform:scaleX(0.9843);'>Enable request blocking</span>
<span class="t" style='left:164.00px;top:334.39px;font-size:8.4px;line-height:8.4px;color:#333;font-family:"Liberation Sans", sans-serif;font-weight:400;transform:scaleX(1.0136);'>*/arquivos/*.js</span>
<span class="t" style='left:590.00px;top:334.39px;font-size:8.4px;line-height:8.4px;color:#333;font-family:"Liberation Sans", sans-serif;font-weight:400;transform:scaleX(0.9900);'>0 blocked</span>
<span class="t" style='left:164.00px;top:355.39px;font-size:8.4px;line-height:8.4px;color:#333;font-family:"Liberation Sans", sans-serif;font-weight:400;transform:scaleX(1.0397);'>*/files/*js</span>
<span class="t" style='left:590.00px;top:355.39px;font-size:8.4px;line-height:8.4px;color:#333;font-family:"Liberation Sans", sans-serif;font-weight:400;transform:scaleX(0.9900);'>0 blocked</span>
<span class="t" style='left:164.00px;top:376.39px;font-size:8.4px;line-height:8.4px;color:#333;font-family:"Liberation Sans", sans-serif;font-weight:400;transform:scaleX(0.9962);'>*/arquivos/*.css</span>
<span class="t" style='left:590.00px;top:376.39px;font-size:8.4px;line-height:8.4px;color:#333;font-family:"Liberation Sans", sans-serif;font-weight:400;transform:scaleX(0.9900);'>0 blocked</span>
<span class="t" style='left:164.00px;top:397.39px;font-size:8.4px;line-height:8.4px;color:#333;font-family:"Liberation Sans", sans-serif;font-weight:400;transform:scaleX(1.0008);'>*/files/*.css</span>
<span class="t" style='left:590.00px;top:397.39px;font-size:8.4px;line-height:8.4px;color:#333;font-family:"Liberation Sans", sans-serif;font-weight:400;transform:scaleX(0.9900);'>0 blocked</span>
<span class="t" style='left:164.00px;top:418.39px;font-size:8.4px;line-height:8.4px;color:#333;font-family:"Liberation Sans", sans-serif;font-weight:400;transform:scaleX(1.0496);'>*gtm*</span>
<span class="t" style='left:590.00px;top:418.39px;font-size:8.4px;line-height:8.4px;color:#333;font-family:"Liberation Sans", sans-serif;font-weight:400;transform:scaleX(0.9900);'>0 blocked</span>
<span class="t" style='left:590.00px;top:439.39px;font-size:8.4px;line-height:8.4px;color:#333;font-family:"Liberation Sans", sans-serif;font-weight:400;transform:scaleX(0.9900);'>0 blocked</span>
<div style="left:123.600px;top:276.600px;width:452px;height:217.300px;border:6.400px solid #ffff7a;background:transparent;"></div>
<svg style="left:398px;top:476px" width="9" height="13" viewBox="0 0 9 13"><path d="M1.500 1v9l2.200-2 1.400 3.400 1.300-.6-1.400-3.200h2.800z" fill="#fff" stroke="#222" stroke-width=".8"/></svg>
</div></body></html>
